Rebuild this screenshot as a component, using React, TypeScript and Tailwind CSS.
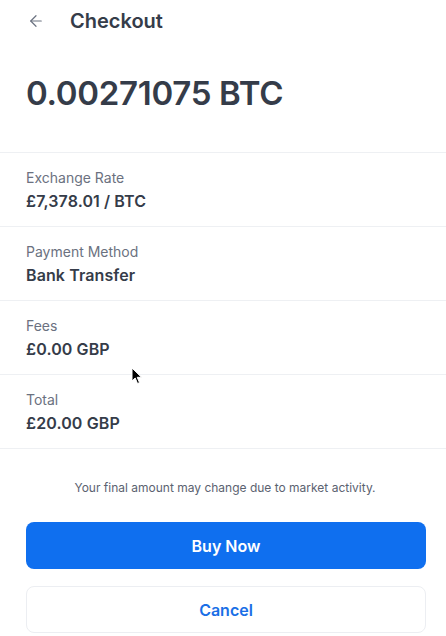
import { ArrowLeft } from 'lucide-react';

const rows = [
  { label: 'Exchange Rate', value: '£7,378.01 / BTC' },
  { label: 'Payment Method', value: 'Bank Transfer' },
  { label: 'Fees', value: '£0.00 GBP' },
  { label: 'Total', value: '£20.00 GBP' },
];

export default function App() {
  return (
    <div className="relative min-h-[636px] w-[446px] bg-white font-['Inter',sans-serif] text-[#353c49]">
      <header className="flex h-[42px] items-center px-[27px]">
        <ArrowLeft size={18} strokeWidth={1.6} className="text-[#6b7280]" aria-hidden />
        <h1 className="ml-[25px] text-[20px] font-semibold">Checkout</h1>
      </header>

      <div className="flex h-[110px] items-center px-[26px] pb-[6px]">
        <p className="text-[33px] font-semibold tracking-[-0.3px]">0.00271075 BTC</p>
      </div>

      <ul className="border-t border-[#eef0f3]">
        {rows.map((row) => (
          <li key={row.label} className="flex h-[74px] flex-col justify-center border-b border-[#eef0f3] px-[26px]">
            <span className="text-[14px] leading-[20px] text-[#6b7180]">{row.label}</span>
            <span className="mt-[2px] text-[16px] font-semibold leading-[22px] tracking-[0.1px]">{row.value}</span>
          </li>
        ))}
      </ul>

      <p className="mt-[30px] pl-[4px] text-center text-[12px] text-[#5b6270]">
        Your final amount may change due to market activity.
      </p>

      <div className="mt-[25px] flex w-[400px] flex-col gap-[17px] ml-[26px]">
        <button type="button" className="h-[47px] rounded-[8px] bg-[#0f6fef] text-[16px] font-semibold text-white">
          Buy Now
        </button>
        <button type="button" className="h-[47px] rounded-[8px] border border-[#eceef2] bg-white text-[16px] font-semibold text-[#1a6fe6]">
          Cancel
        </button>
      </div>

      <svg
        className="absolute left-[131px] top-[367px]"
        width="12"
        height="18"
        viewBox="0 0 12 18"
        aria-hidden
      >
        <path d="M1 1 L1 14 L4.2 11 L6.5 16.5 L8.5 15.6 L6.2 10.3 L10.5 10.3 Z" fill="#000" stroke="#fff" strokeWidth="1" />
      </svg>
    </div>
  );
}
